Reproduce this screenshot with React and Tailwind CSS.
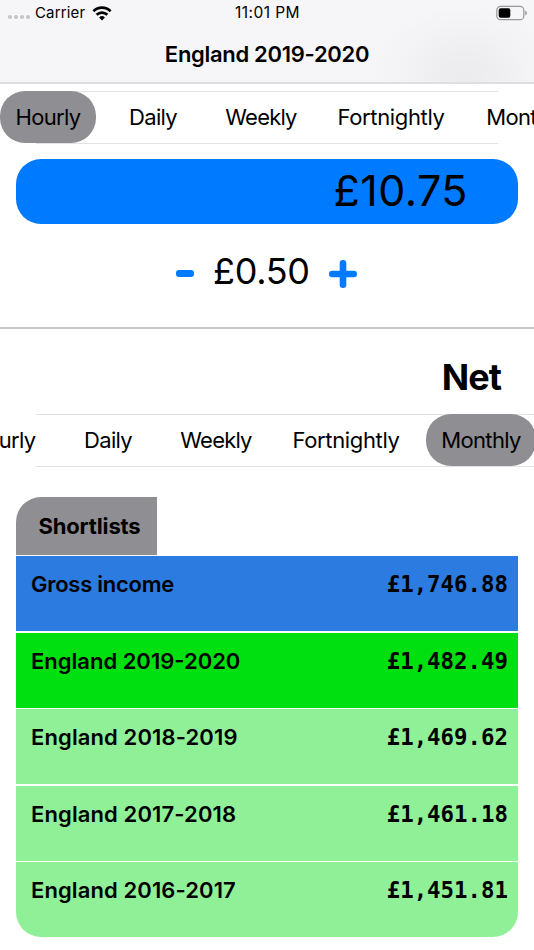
import React from "react";
import clsx from "clsx";

const periods = [
  { label: "Hourly", cell: "w-24", spacing: "tracking-[-0.7px]" },
  { label: "Daily", cell: "w-20 ml-[17px]", spacing: "tracking-[-0.7px]" },
  { label: "Weekly", cell: "w-[104px] ml-4", spacing: "tracking-[-0.8px]" },
  { label: "Fortnightly", cell: "w-[140px] ml-2", spacing: "tracking-[-0.35px]" },
  { label: "Monthly", cell: "w-[110px] ml-[10px]", spacing: "tracking-[-0.65px]" },
];

const rows = [
  { name: "Gross income", amount: "£1,746.88", color: "bg-[#2b7be0]", spacing: "tracking-[-0.25px]" },
  { name: "England 2019-2020", amount: "£1,482.49", color: "bg-[#00e010]", spacing: "tracking-[0px]" },
  { name: "England 2018-2019", amount: "£1,469.62", color: "bg-[#90f098]", spacing: "tracking-[0.12px]" },
  { name: "England 2017-2018", amount: "£1,461.18", color: "bg-[#90f098]", spacing: "tracking-[0.12px]" },
  { name: "England 2016-2017", amount: "£1,451.81", color: "bg-[#90f098]", spacing: "tracking-[0.1px]" },
];

function StatusBar() {
  return (
    <div className="grid h-[26px] grid-cols-[1fr_auto_1fr] items-center pl-2 pr-[7px] text-[15px]">
      <div className="flex items-center">
        <svg width="23" height="8" viewBox="0 0 23 8" className="mt-2" fill="#c4c3c5">
          <circle cx="2" cy="4" r="2" />
          <circle cx="8" cy="4" r="2" />
          <circle cx="14" cy="4" r="2" />
          <circle cx="20" cy="4" r="2" />
        </svg>
        <span className="ml-1 w-[52px] tracking-[0.15px]">Carrier</span>
        <svg width="20" height="15" viewBox="0 0 20 15" className="ml-[5px]" fill="none" stroke="#000" strokeWidth="2.7">
          <path d="M1.4 5.2a12.2 12.2 0 0 1 17.2 0" />
          <path d="M4.6 8.8a7.7 7.7 0 0 1 10.8 0" />
          <path d="M10 14.4l-2.9-3a4.1 4.1 0 0 1 5.8 0z" fill="#000" stroke="none" />
        </svg>
      </div>
      <span className="text-[15.5px] tracking-[0.45px]">11:01 PM</span>
      <svg width="32" height="16" viewBox="0 0 32 16" className="justify-self-end">
        <rect x="1.8" y="1.3" width="27" height="13.4" rx="3.8" fill="none" stroke="#98979a" strokeWidth="1.2" />
        <rect x="3.7" y="3.2" width="11.6" height="9.6" rx="2" />
        <path d="M30.2 5.5c2.2.8 2.2 4.2 0 5z" fill="#98979a" />
      </svg>
    </div>
  );
}

function PeriodPicker({ selected, scrolled }) {
  return (
    <div className="relative h-[53px] overflow-hidden">
      <div
        className={clsx(
          "absolute inset-y-0 border-y border-[#e3e3e5]",
          scrolled ? "left-9 right-0" : "left-9 right-9"
        )}
      />
      <div className={clsx("relative flex w-max", scrolled && "-ml-[45px]")}>
        {periods.map((p) => (
          <button
            key={p.label}
            className={clsx(
              "flex h-[52px] shrink-0 items-center justify-center rounded-[25px] pt-px text-[22px]",
              p.cell,
              p.spacing,
              selected === p.label && "bg-[#8e8e93]"
            )}
          >
            {p.label}
          </button>
        ))}
      </div>
    </div>
  );
}

export default function App() {
  return (
    <div className="h-[950px] w-[534px] overflow-hidden bg-white font-['Inter','Liberation_Sans',sans-serif] text-black">
      <header className="h-[84px] border-b-2 border-[#dedde0] bg-[#f6f5f7] bg-[radial-gradient(ellipse_90px_70px_at_465px_75px,#ebeaec,#f6f5f7)]">
        <StatusBar />
        <h1 className="pt-3 text-center text-[22px] leading-8 font-semibold tracking-[-0.3px]">England 2019-2020</h1>
      </header>

      <div className="pt-[7px]">
        <PeriodPicker selected="Hourly" />
      </div>

      {/* gross amount */}
      <div className="mx-4 mt-[15px] flex h-[65px] items-center justify-end rounded-[25px] bg-[#007aff] pr-[50px] pb-[3px] text-[43px] tracking-[0.5px]">
        £10.75
      </div>

      {/* step size */}
      <div className="mt-[22px] flex h-[50px] items-center pl-44">
        <button aria-label="decrease" className="mt-[5px] h-[7px] w-[18px] rounded-[3px] bg-[#007aff]" />
        <span className="ml-[19px] w-[97px] pb-px text-[36px] tracking-[-0.3px]">£0.50</span>
        <button aria-label="increase" className="mt-[6px] ml-[19px]">
          <svg width="28" height="28" viewBox="0 0 28 28" stroke="#007aff" strokeWidth="6.6" strokeLinecap="round">
            <path d="M3.3 14h21.4M14 3.3v21.4" />
          </svg>
        </button>
      </div>

      <div className="mt-[31px] h-[2px] bg-[#c6c6c8]" />

      <h2 className="mt-[27px] h-[42px] pr-[33px] text-right text-[36px] leading-[43px] font-bold tracking-[-0.9px]">Net</h2>
      <div className="mt-4">
        <PeriodPicker selected="Monthly" scrolled />
      </div>

      <div className="mx-4 mt-[30px]">
        <div className="flex h-[57.5px] w-[141px] items-center justify-center rounded-tl-[25px] bg-[#8e8e93] pt-px pl-[6px] text-[22px] font-bold tracking-[-0.15px]">
          Shortlists
        </div>
        <div className="mt-[1.5px] flex flex-col gap-[1.5px] overflow-hidden rounded-b-[25px]">
          {rows.map((row) => (
            <div
              key={row.name}
              className={clsx("flex h-[75px] justify-between pt-3 pr-[10px] pl-[15px] text-[22px] leading-8", row.color)}
            >
              <span className={clsx("font-semibold", row.spacing)}>{row.name}</span>
              <span className="font-['DejaVu_Sans_Mono',monospace] text-[22.4px] font-bold">{row.amount}</span>
            </div>
          ))}
        </div>
      </div>
    </div>
  );
}
